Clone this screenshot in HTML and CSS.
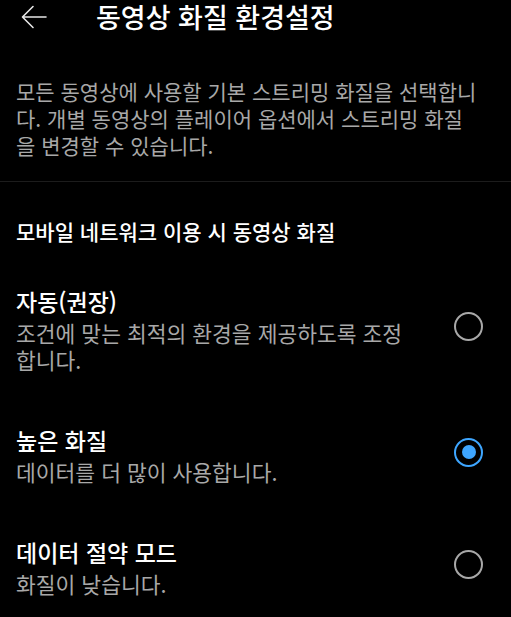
FILE: index.html
```html
<!DOCTYPE html>
<html lang="ko">
<head>
  <meta charset="UTF-8" />
  <meta name="viewport" content="width=device-width, initial-scale=1.0"/>
  <title>동영상 화질 환경설정</title>
  <link rel="stylesheet" href="styles.css">
</head>
<body>

  <!-- top bar -->
  <header class="top-bar">
    <button class="back" aria-label="뒤로">
      <svg width="26" height="24" viewBox="0 0 26 24" fill="none" stroke="#e6e6e6" stroke-width="1.6" stroke-linecap="round" stroke-linejoin="round">
        <path d="M25 12H2M12 1.5L1.5 12L12 22.5"/>
      </svg>
    </button>
    <h1>동영상 화질 환경설정</h1>
  </header>

  <p class="intro">모든 동영상에 사용할 기본 스트리밍 화질을 선택합니다. 개별 동영상의 플레이어 옵션에서 스트리밍 화질을 변경할 수 있습니다.</p>

  <section class="group">
    <h2>모바일 네트워크 이용 시 동영상 화질</h2>

    <label class="option">
      <div class="text">
        <div class="name">자동(권장)</div>
        <div class="desc">조건에 맞는 최적의 환경을 제공하도록 조정합니다.</div>
      </div>
      <input type="radio" name="quality">
      <span class="radio"></span>
    </label>

    <label class="option">
      <div class="text">
        <div class="name">높은 화질</div>
        <div class="desc">데이터를 더 많이 사용합니다.</div>
      </div>
      <input type="radio" name="quality" checked>
      <span class="radio"></span>
    </label>

    <label class="option">
      <div class="text">
        <div class="name">데이터 절약 모드</div>
        <div class="desc">화질이 낮습니다.</div>
      </div>
      <input type="radio" name="quality">
      <span class="radio"></span>
    </label>
  </section>

</body>
</html>
```

FILE: styles.css
```css
:root {
  --bg: #000000;
  --text: #f1f1f1;
  --muted: #a8a8a8;
  --line: #1c1c1c;
  --blue: #3ea6ff;
}

body {
  margin: 0;
  background: var(--bg);
  color: var(--text);
  font-family: "Noto Sans CJK KR", "Noto Sans", sans-serif;
  overflow: hidden;
}

.top-bar {
  display: flex;
  align-items: center;
  height: 34px;
  padding-left: 21px;
}

.back {
  display: flex;
  padding: 0;
  margin: 0 49px 0 0;
  background: none;
  border: none;
  cursor: pointer;
}

.top-bar h1 {
  margin: 0;
  font-size: 27px;
  font-weight: 500;
  line-height: 34px;
  color: #fff;
}

.intro {
  margin: 0;
  padding: 44px 32px 22px 16px;
  font-size: 21px;
  line-height: 27px;
  color: var(--muted);
  word-break: break-all;
  border-bottom: 1px solid var(--line);
}

.group h2 {
  margin: 0;
  padding: 35px 16px 14px;
  font-size: 21px;
  font-weight: 500;
  line-height: 28px;
  color: #fff;
}

.option {
  display: flex;
  align-items: center;
  gap: 40px;
  padding: 24px 28px 25px 16px;
  cursor: pointer;
}

.option .text {
  flex: 1;
}

.option .name {
  font-size: 23px;
  font-weight: 500;
  line-height: 36px;
  color: #fff;
}

.option .desc {
  font-size: 21.5px;
  line-height: 27px;
  color: var(--muted);
  word-break: break-all;
}

.option input {
  display: none;
}

.radio {
  flex: none;
  width: 25px;
  height: 25px;
  margin-top: -3px;
  border: 2.5px solid var(--muted);
  border-radius: 50%;
  display: flex;
  align-items: center;
  justify-content: center;
}

.option input:checked + .radio {
  border-color: var(--blue);
}

.option input:checked + .radio::after {
  content: "";
  width: 14px;
  height: 14px;
  border-radius: 50%;
  background: var(--blue);
}
```
